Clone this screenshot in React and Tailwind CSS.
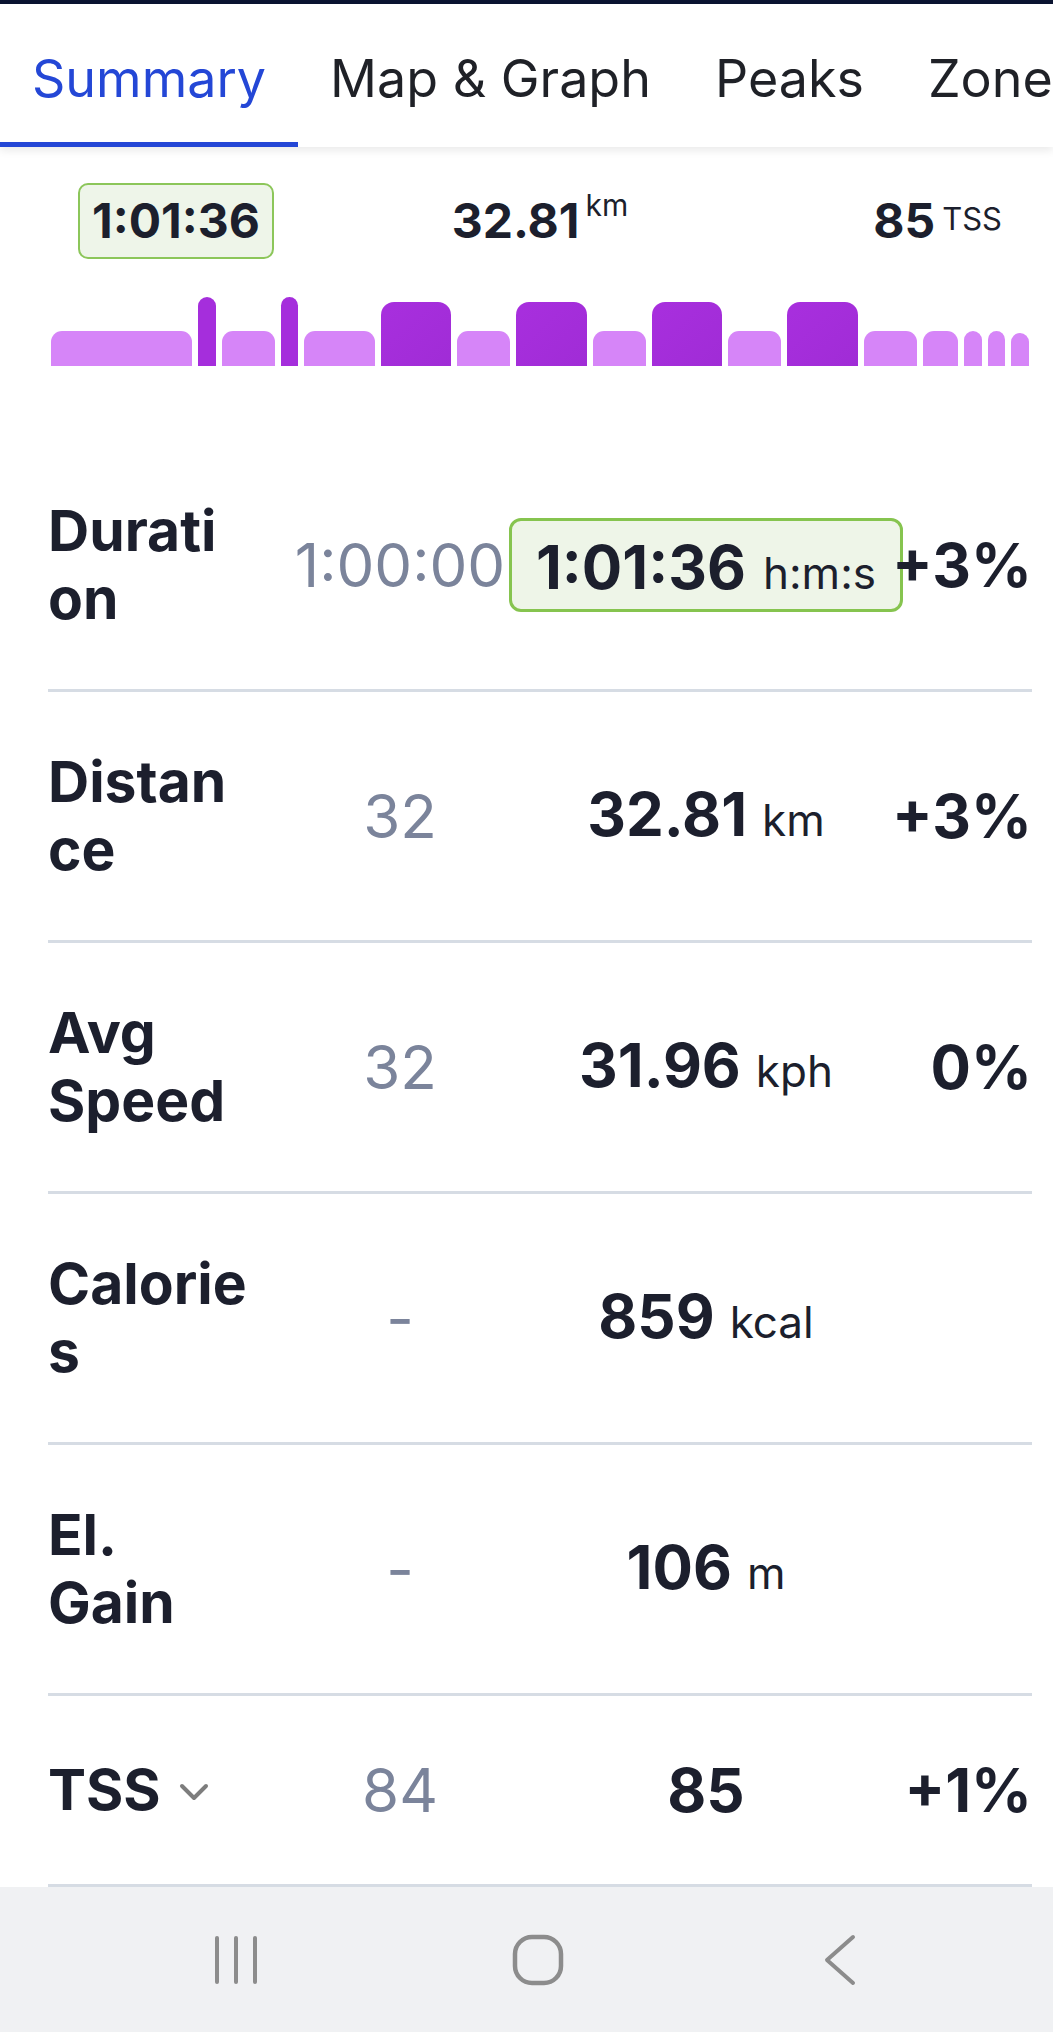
import React from "react";

const tabs = ["Summary", "Map & Graph", "Peaks", "Zones"];

// workout structure bars (width px, height px, tone)
const bars = [
  { w: 141, h: 35, tone: "light" },
  { w: 18, h: 69, tone: "spike" },
  { w: 53, h: 35, tone: "light" },
  { w: 17, h: 69, tone: "spike" },
  { w: 71, h: 35, tone: "light" },
  { w: 70, h: 64, tone: "dark" },
  { w: 53, h: 35, tone: "light" },
  { w: 71, h: 64, tone: "dark" },
  { w: 53, h: 35, tone: "light" },
  { w: 70, h: 64, tone: "dark" },
  { w: 53, h: 35, tone: "light" },
  { w: 71, h: 64, tone: "dark" },
  { w: 53, h: 35, tone: "light" },
  { w: 35, h: 35, tone: "light" },
  { w: 18, h: 35, tone: "thin" },
  { w: 17, h: 35, tone: "thin" },
  { w: 18, h: 33, tone: "thin" },
];

const toneClass = {
  light: "bg-[#d685f8] rounded-t-[11px]",
  thin: "bg-[#d685f8] rounded-t-full",
  dark: "bg-gradient-to-br from-[#a82fde] to-[#a02cd6] rounded-t-[13px]",
  spike: "bg-[#a52edc] rounded-t-full",
};

function Row({ label, planned, children, change, single, extra }) {
  return (
    <div className="grid grid-cols-[200px_304px_308px_1fr] items-center py-[56px] border-b-[3px] border-[#d6dce4]">
      <div
        className={`min-w-0 text-[57px] leading-[68px] font-bold text-[#1c1f2d] [overflow-wrap:anywhere] ${
          single ? "flex items-center h-[76px]" : ""
        }`}
      >
        <span>{label}</span>
        {extra}
      </div>
      <div className="flex justify-center text-[60px] leading-[68px] text-[#7b849b] whitespace-nowrap">
        {planned}
      </div>
      <div className="flex justify-center whitespace-nowrap">{children}</div>
      <div className="flex justify-end text-[60px] leading-[68px] font-bold text-[#1c1f2d] whitespace-nowrap">
        {change}
      </div>
    </div>
  );
}

function Value({ value, unit }) {
  return (
    <div className="flex items-baseline text-[#1c1f2d]">
      <span className="text-[60px] leading-[68px] font-bold">{value}</span>
      {unit && <span className="text-[44px] ml-[15px]">{unit}</span>}
    </div>
  );
}

export default function App() {
  return (
    <div className="w-[1053px] h-[2032px] flex flex-col bg-white font-['Inter',sans-serif] overflow-hidden">
      <div className="h-[4px] bg-[#0b1431]" />

      <nav className="relative z-10 flex h-[143px] bg-white shadow-[0_4px_8px_rgba(0,0,0,0.08)] whitespace-nowrap overflow-hidden">
        {tabs.map((t, i) => (
          <div
            key={t}
            className={`flex items-center px-8 pt-[11px] border-b-[5px] text-[52px] ${
              i === 0
                ? "border-[#2447d6] text-[#2447d6]"
                : "border-transparent text-[#1f2127]"
            }`}
          >
            {t}
          </div>
        ))}
      </nav>

      <main className="flex-1 overflow-hidden">
        <section className="pt-[36px] pl-[51px] pr-[24px]">
          <div className="grid grid-cols-3 items-center h-[76px] px-[27px] text-[#1c1f2d]">
            <div className="justify-self-start">
              <div className="flex items-center h-[76px] px-[12px] rounded-[10px] border-2 border-[#8cc65a] bg-[#eef5e9] text-[48px] font-bold">
                1:01:36
              </div>
            </div>
            <div className="justify-self-center flex items-start">
              <span className="text-[48px] leading-[58px] font-bold">32.81</span>
              <span className="text-[30px] leading-[30px] ml-[6px] -mt-[2px]">km</span>
            </div>
            <div className="justify-self-end flex items-baseline">
              <span className="text-[48px] leading-[58px] font-bold">85</span>
              <span className="text-[31px] ml-[7px] relative -top-[8px]">TSS</span>
            </div>
          </div>

          <div className="mt-[38px] h-[69px] flex items-end gap-[6px]">
            {bars.map((b, i) => (
              <div
                key={i}
                className={toneClass[b.tone]}
                style={{ width: b.w, height: b.h }}
              />
            ))}
          </div>
        </section>

        <section className="mt-[75px] pl-[48px] pr-[21px]">
          <Row label="Duration" planned="1:00:00" change="+3%">
            <div className="flex items-baseline h-[94px] pt-[12px] px-[24px] rounded-[12px] border-[3px] border-[#86c44f] bg-[#eef5e8] text-[#1c1f2d]">
              <span className="text-[60px] leading-[68px] font-bold">1:01:36</span>
              <span className="text-[44px] ml-[17px]">h:m:s</span>
            </div>
          </Row>
          <Row label="Distance" planned="32" change="+3%">
            <Value value="32.81" unit="km" />
          </Row>
          <Row label="Avg Speed" planned="32" change="0%">
            <Value value="31.96" unit="kph" />
          </Row>
          <Row label="Calories" planned="-" change="">
            <Value value="859" unit="kcal" />
          </Row>
          <Row label="El. Gain" planned="-" change="">
            <Value value="106" unit="m" />
          </Row>
          <Row
            label="TSS"
            planned="84"
            change="+1%"
            single
            extra={
              <svg width="30" height="20" viewBox="0 0 30 20" className="ml-[18px] mt-[4px] shrink-0">
                <polyline
                  points="3,4 15,16 27,4"
                  fill="none"
                  stroke="#7d7d7d"
                  strokeWidth="4"
                  strokeLinecap="round"
                  strokeLinejoin="round"
                />
              </svg>
            }
          >
            <Value value="85" />
          </Row>
        </section>
      </main>

      <footer className="h-[145px] shrink-0 bg-[#f0f1f3] flex items-center pl-[85px]">
        <div className="w-[302px] flex justify-center">
          <svg width="48" height="50" viewBox="0 0 48 50">
            <g stroke="#8c8c8c" strokeWidth="4" strokeLinecap="round">
              <line x1="5" y1="3" x2="5" y2="47" />
              <line x1="24" y1="3" x2="24" y2="47" />
              <line x1="43" y1="3" x2="43" y2="47" />
            </g>
          </svg>
        </div>
        <div className="w-[302px] flex justify-center">
          <svg width="52" height="52" viewBox="0 0 52 52">
            <rect x="3" y="3" width="46" height="46" rx="17" fill="none" stroke="#8c8c8c" strokeWidth="4.5" />
          </svg>
        </div>
        <div className="w-[302px] flex justify-center">
          <svg width="36" height="52" viewBox="0 0 36 52">
            <polyline
              points="31,3 5,26 31,49"
              fill="none"
              stroke="#8c8c8c"
              strokeWidth="4"
              strokeLinecap="round"
              strokeLinejoin="round"
            />
          </svg>
        </div>
      </footer>
    </div>
  );
}
